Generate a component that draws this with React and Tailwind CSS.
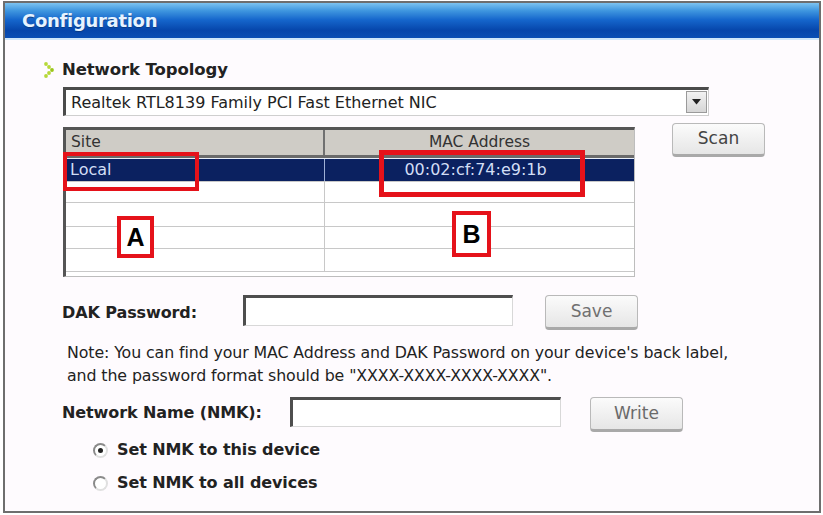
import React from "react";

const font = { fontFamily: '"DejaVu Sans", Tahoma, sans-serif' };

function GreenArrow() {
  // small dotted chevron used as a section bullet
  const dots = [
    [2, 2], [5, 5], [8, 8], [5, 11], [2, 14],
  ];
  return (
    <svg width="12" height="17" viewBox="0 0 12 17" className="shrink-0">
      {dots.map(([x, y], i) => (
        <circle key={i} cx={x + 1} cy={y} r="1.9" fill={i === 2 ? "#9bc61a" : "#b6d83a"} />
      ))}
    </svg>
  );
}

function XpButton({ label, tone = "text-[#555]", className = "" }) {
  return (
    <div
      className={`flex items-center justify-center rounded-[4px] border border-[#b9b9b9] border-b-[3px] border-b-[#a9a9a9] bg-gradient-to-b from-[#fbfbfb] to-[#e6e6e6] text-[17px] ${tone} ${className}`}
      style={font}
    >
      {label}
    </div>
  );
}

function Sunken({ className = "" }) {
  return (
    <div
      className={`border-t-[3px] border-l-[3px] border-t-[#4e4e4e] border-l-[#4e4e4e] border-b border-r border-b-[#d8d8d8] border-r-[#d8d8d8] bg-white ${className}`}
    />
  );
}

function Radio({ checked }) {
  return (
    <div className="relative w-[15px] h-[15px] rounded-full border-2 border-[#8a8a8a] border-r-[#e0e0e0] border-b-[#e0e0e0] bg-white flex items-center justify-center">
      {checked && <div className="w-[5px] h-[5px] rounded-full bg-[#222]" />}
    </div>
  );
}

const rows = [
  { site: "Local", mac: "00:02:cf:74:e9:1b", sel: true, h: "h-[24px]" },
  { h: "h-[21px]" },
  { h: "h-[24px]" },
  { h: "h-[22px]" },
  { h: "h-[23px]" },
];

export default function App() {
  return (
    <div className="w-[823px] h-[515px] bg-white overflow-hidden">
      <div className="ml-[3px] mt-[1px] w-[818px] h-[512px] border-2 border-[#6e6e6e] flex flex-col bg-[#fefbfe]">
        {/* title bar */}
        <div className="h-[35px] shrink-0 flex items-center pl-[17px] bg-[linear-gradient(to_bottom,#7cc3f0_0%,#3f96df_22%,#1566cc_48%,#0646ab_78%,#0a4fb4_100%)]">
          <span
            className="text-[18px] font-bold text-[#e6f3ff] tracking-[-0.3px] [text-shadow:0_1px_1px_#0a3a80]"
            style={font}
          >
            Configuration
          </span>
        </div>
        <div className="h-[2px] bg-[#cfe7fa]" />

        <div className="flex flex-col" style={font}>
          {/* section heading */}
          <div className="mt-[20px] ml-[38px] h-[20px] flex items-center gap-[7px]">
            <GreenArrow />
            <span className="text-[16.5px] font-bold text-[#222] tracking-[-0.1px]">Network Topology</span>
          </div>

          {/* adapter select */}
          <div className="mt-[7px] ml-[58px] w-[646px] h-[29px] flex border-t-[3px] border-l-[3px] border-[#4b4b4b] border-b border-r border-b-[#cfcfcf] border-r-[#cfcfcf] bg-white">
            <div className="flex-1 flex items-center pl-[5px] text-[16px] text-[#222]">
              Realtek RTL8139 Family PCI Fast Ethernet NIC
            </div>
            <div className="w-[21px] h-[22px] mt-[1px] mr-[1px] border border-[#9a9a9a] bg-gradient-to-b from-[#f2f2f2] to-[#d6d6d6] flex items-center justify-center">
              <svg width="9" height="6" viewBox="0 0 9 6">
                <path d="M0 0 H9 L4.5 5.5 Z" fill="#222" />
              </svg>
            </div>
          </div>

          {/* site table + scan */}
          <div className="flex items-start ml-[58px]">
            <div className="relative mt-[11px] w-[572px] h-[150px] border-t-[3px] border-l-[3px] border-[#555] border-r border-b border-r-[#bdbdbd] border-b-[#bdbdbd] bg-white">
              <div className="h-[28px] flex bg-[#cfccc6] border-b-[3px] border-b-[#6a6a6a] text-[15.5px] text-[#333]">
                <div className="w-[259px] border-r-[2px] border-r-[#707070] pl-[5px] flex items-center">Site</div>
                <div className="flex-1 flex items-center justify-center">MAC Address</div>
              </div>
              {rows.map((r, i) => (
                <div
                  key={i}
                  className={`${r.h} flex border-b border-b-[#c8c8c8] text-[16px] ${r.sel ? "bg-[#0b2160] text-[#d2def5] border-t border-t-[#e8eef8]" : ""}`}
                >
                  <div className={`w-[259px] border-r ${r.sel ? "border-r-[#9fb0d6]" : "border-r-[#c8c8c8]"} pl-[4px] flex items-center`}>
                    {r.site}
                  </div>
                  <div className="flex-1 flex items-center justify-center pr-[8px]">{r.mac}</div>
                </div>
              ))}

              {/* red callouts */}
              <div className="absolute left-[-3px] top-[22px] w-[136px] h-[39px] border-[4px] border-[#e5121a]" />
              <div className="absolute left-[313px] top-[20px] w-[206px] h-[47px] border-[5px] border-[#e5121a]" />
              <div className="absolute left-[51px] top-[86px] w-[37px] h-[42px] border-[4px] border-[#e5121a] bg-white flex items-center justify-center">
                <span className="text-[25px] font-bold text-black leading-none" style={{ fontFamily: '"Liberation Sans", Arial, sans-serif' }}>A</span>
              </div>
              <div className="absolute left-[386px] top-[81px] w-[39px] h-[46px] border-[4px] border-[#e5121a] bg-white flex items-center justify-center">
                <span className="text-[25px] font-bold text-black leading-none" style={{ fontFamily: '"Liberation Sans", Arial, sans-serif' }}>B</span>
              </div>
            </div>
            <XpButton label="Scan" tone="text-[#444]" className="ml-[37px] mt-[7px] w-[93px] h-[34px]" />
          </div>

          {/* DAK password */}
          <div className="mt-[18px] ml-[57px] flex items-start">
            <div className="w-[181px] h-[31px] flex items-center text-[16px] font-bold text-[#222] tracking-[-0.1px] pt-[5px]">
              DAK Password:
            </div>
            <Sunken className="w-[270px] h-[31px]" />
            <XpButton label="Save" tone="text-[#707070]" className="ml-[32px] w-[93px] h-[35px]" />
          </div>

          {/* note */}
          <div className="mt-[11px] ml-[62px] text-[15.8px] leading-[23px] text-[#222] tracking-[-0.1px]">
            <div>Note: You can find your MAC Address and DAK Password on your device's back label,</div>
            <div>and the password format should be "XXXX-XXXX-XXXX-XXXX".</div>
          </div>

          {/* network name */}
          <div className="mt-[10px] ml-[57px] flex items-start">
            <div className="w-[228px] h-[30px] flex items-center text-[16px] font-bold text-[#222] tracking-[-0.1px] pt-[1px]">
              Network Name (NMK):
            </div>
            <Sunken className="w-[271px] h-[30px]" />
            <XpButton label="Write" tone="text-[#6a6a6a]" className="ml-[29px] w-[93px] h-[35px]" />
          </div>

          {/* radio options */}
          <div className="mt-[6px] ml-[88px] flex flex-col gap-[9px]">
            <div className="h-[24px] flex items-center gap-[9px]">
              <Radio checked />
              <span className="text-[16px] font-bold text-[#222] tracking-[-0.1px]">Set NMK to this device</span>
            </div>
            <div className="h-[24px] flex items-center gap-[9px]">
              <Radio />
              <span className="text-[16px] font-bold text-[#222] tracking-[-0.1px]">Set NMK to all devices</span>
            </div>
          </div>
        </div>
      </div>
    </div>
  );
}
